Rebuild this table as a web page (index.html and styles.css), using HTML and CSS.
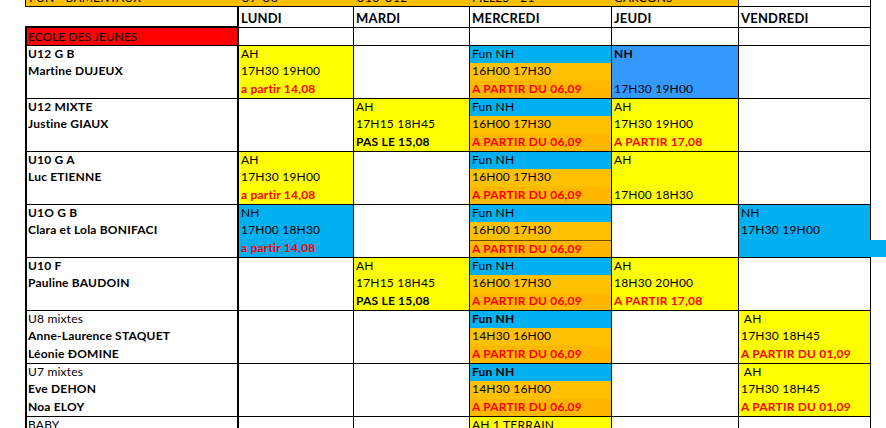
FILE: index.html
```html
<!DOCTYPE html>
<html lang="fr">
<head>
  <meta charset="UTF-8" />
  <meta name="viewport" content="width=device-width, initial-scale=1.0"/>
  <title>Planning Ecole des Jeunes</title>
  <link rel="stylesheet" href="styles.css">
</head>
<body>
  <div class="sheet">
    <!-- bande du haut, presque entièrement coupée -->
    <div class="row strip">
      <div class="cell label gold"><span class="clip">FUN - BAMENTAUX</span></div>
      <div class="cell gold"><span class="clip">U7-U8</span></div>
      <div class="cell gold"><span class="clip">U10-U12</span></div>
      <div class="cell gold"><span class="clip">FILLES - 21</span></div>
      <div class="cell gold edge"><span class="clip">GARCONS</span></div>
      <div class="cell edge"></div>
      <div class="cell spare"></div>
    </div>

    <div class="row head">
      <div class="cell label"></div>
      <div class="cell">LUNDI</div>
      <div class="cell">MARDI</div>
      <div class="cell">MERCREDI</div>
      <div class="cell">JEUDI</div>
      <div class="cell">VENDREDI</div>
      <div class="cell spare"></div>
    </div>

    <div class="row title">
      <div class="cell label red-bg">ECOLE DES JEUNES</div>
      <div class="cell"></div>
      <div class="cell"></div>
      <div class="cell"></div>
      <div class="cell"></div>
      <div class="cell"></div>
      <div class="cell spare"></div>
    </div>

    <!-- U12 G B -->
    <div class="row group">
      <div class="cell label"><div class="ln b">U12 G B</div><div class="ln b">Martine DUJEUX</div><div class="ln"></div></div>
      <div class="cell yellow"><div class="ln">AH</div><div class="ln">17H30 19H00</div><div class="ln warn">a partir 14,08</div></div>
      <div class="cell"></div>
      <div class="cell fun"><div class="ln sky">Fun NH</div><div class="ln gold">16H00 17H30</div><div class="ln amber warn">A PARTIR DU 06,09</div></div>
      <div class="cell azure"><div class="ln b">NH</div><div class="ln"></div><div class="ln">17H30 19H00</div></div>
      <div class="cell"></div>
      <div class="cell spare"></div>
    </div>

    <!-- U12 MIXTE -->
    <div class="row group">
      <div class="cell label"><div class="ln b">U12 MIXTE</div><div class="ln b">Justine GIAUX</div><div class="ln"></div></div>
      <div class="cell"></div>
      <div class="cell yellow"><div class="ln">AH</div><div class="ln">17H15 18H45</div><div class="ln b">PAS LE 15,08</div></div>
      <div class="cell fun"><div class="ln sky">Fun NH</div><div class="ln gold">16H00 17H30</div><div class="ln amber warn">A PARTIR DU 06,09</div></div>
      <div class="cell yellow"><div class="ln">AH</div><div class="ln">17H30 19H00</div><div class="ln warn">A PARTIR 17,08</div></div>
      <div class="cell"></div>
      <div class="cell spare"></div>
    </div>

    <!-- U10 G A -->
    <div class="row group">
      <div class="cell label"><div class="ln b">U10 G A</div><div class="ln b">Luc ETIENNE</div><div class="ln"></div></div>
      <div class="cell yellow"><div class="ln">AH</div><div class="ln">17H30 19H00</div><div class="ln warn">a partir 14,08</div></div>
      <div class="cell"></div>
      <div class="cell fun"><div class="ln sky">Fun NH</div><div class="ln gold">16H00 17H30</div><div class="ln amber warn">A PARTIR DU 06,09</div></div>
      <div class="cell yellow"><div class="ln">AH</div><div class="ln"></div><div class="ln">17H00 18H30</div></div>
      <div class="cell"></div>
      <div class="cell spare"></div>
    </div>

    <!-- U1O G B -->
    <div class="row group">
      <div class="cell label"><div class="ln b">U1O G B</div><div class="ln b">Clara et Lola BONIFACI</div><div class="ln"></div></div>
      <div class="cell sky"><div class="ln">NH</div><div class="ln">17H00 18H30</div><div class="ln warn">a partir 14,08</div></div>
      <div class="cell"></div>
      <div class="cell fun"><div class="ln sky">Fun NH</div><div class="ln gold">16H00 17H30</div><div class="ln amber warn split">A PARTIR DU 06,09</div></div>
      <div class="cell"></div>
      <div class="cell spill"><div class="ln sky">NH</div><div class="ln sky">17H30 19H00</div><div class="ln sky"></div></div>
      <div class="cell spare tail"></div>
    </div>

    <!-- U10 F -->
    <div class="row group">
      <div class="cell label"><div class="ln b">U10 F</div><div class="ln b">Pauline BAUDOIN</div><div class="ln"></div></div>
      <div class="cell"></div>
      <div class="cell yellow"><div class="ln">AH</div><div class="ln">17H15 18H45</div><div class="ln b">PAS LE 15,08</div></div>
      <div class="cell fun"><div class="ln sky">Fun NH</div><div class="ln gold">16H00 17H30</div><div class="ln amber warn">A PARTIR DU 06,09</div></div>
      <div class="cell yellow"><div class="ln">AH</div><div class="ln">18H30 20H00</div><div class="ln warn">A PARTIR 17,08</div></div>
      <div class="cell"></div>
      <div class="cell spare"></div>
    </div>

    <!-- U8 mixtes -->
    <div class="row group">
      <div class="cell label"><div class="ln">U8 mixtes</div><div class="ln b">Anne-Laurence STAQUET</div><div class="ln b">Léonie ĐOMINE</div></div>
      <div class="cell"></div>
      <div class="cell"></div>
      <div class="cell fun"><div class="ln sky b">Fun NH</div><div class="ln gold">14H30 16H00</div><div class="ln amber warn">A PARTIR DU 06,09</div></div>
      <div class="cell"></div>
      <div class="cell yellow"><div class="ln">&nbsp;AH</div><div class="ln">17H30 18H45</div><div class="ln warn">A PARTIR DU 01,09</div></div>
      <div class="cell spare"></div>
    </div>

    <!-- U7 mixtes -->
    <div class="row group">
      <div class="cell label"><div class="ln">U7 mixtes</div><div class="ln b">Eve DEHON</div><div class="ln b">Noa ELOY</div></div>
      <div class="cell"></div>
      <div class="cell"></div>
      <div class="cell fun"><div class="ln sky b">Fun NH</div><div class="ln gold">14H30 16H00</div><div class="ln amber warn">A PARTIR DU 06,09</div></div>
      <div class="cell"></div>
      <div class="cell yellow"><div class="ln">&nbsp;AH</div><div class="ln">17H30 18H45</div><div class="ln warn">A PARTIR DU 01,09</div></div>
      <div class="cell spare"></div>
    </div>

    <!-- BABY -->
    <div class="row group">
      <div class="cell label"><div class="ln">BABY</div><div class="ln"></div><div class="ln"></div></div>
      <div class="cell"></div>
      <div class="cell"></div>
      <div class="cell yellow"><div class="ln">AH 1 TERRAIN</div><div class="ln"></div><div class="ln"></div></div>
      <div class="cell"></div>
      <div class="cell"></div>
      <div class="cell spare"></div>
    </div>
  </div>
</body>
</html>
```

FILE: styles.css
```css
* {
  box-sizing: border-box; margin: 0; padding: 0;
}

html, body {
  overflow: hidden;
}

body {
  background: white;
  font-family: Lato, "Liberation Sans", sans-serif;
  font-size: 12px;
  color: #000;
  letter-spacing: 0.2px;
}

.sheet {
  padding-left: 25px;
  width: 886px;
}

.row {
  display: grid;
  grid-template-columns: 214px 115px 116px 142px 127px 132px 15px;
}

.cell {
  border-right: 1px solid #000;
  border-bottom: 1px solid #000;
  padding-left: 2px;
  white-space: nowrap;
  overflow: hidden;
}

.cell.label {
  border-left: 2px solid #000;
  border-right: 2px solid #000;
  padding-left: 0;
}

.cell.spare {
  border: none;
  padding-left: 0;
}

/* bout de remplissage bleu qui dépasse la dernière colonne */
.cell.tail {
  background: linear-gradient(to bottom, transparent 35px, #00b0f0 35px, #00b0f0 52px, transparent 52px);
}

/* bande du haut */
.strip {
  height: 7px;
}

.strip .cell {
  border-right: none;
}

.strip .cell.label {
  border-left: 1px solid #000;
  padding-left: 3px;
}

.strip .cell.edge {
  border-right: 1px solid #000;
}

.clip {
  display: block;
  line-height: 15px;
  margin-top: -10px;
}

/* en-tête des jours */
.head {
  height: 21px;
}

.head .cell {
  font-weight: bold;
  font-size: 13px;
  line-height: 20px;
  padding-top: 1px;
}

.head .cell.label {
  border-left: none;
  border-bottom: 2px solid #000;
}

.title {
  height: 18px;
}

.title .cell {
  font-size: 12px;
  letter-spacing: 0;
  line-height: 16px;
  padding-top: 1px;
}

.title .cell.label {
  padding-left: 1px;
}

/* lignes de groupe : trois sous-lignes par cellule */
.group {
  height: 53px;
}

.group .cell {
  display: grid;
  grid-template-rows: 17px 18px 17px;
}

.group .cell.label .ln {
  padding-left: 1px;
}

.ln {
  line-height: 15px;
}

.fun {
  padding-left: 0;
}

.fun .ln {
  padding-left: 2px;
}

.spill {
  border-right: none;
  padding-left: 0;
}

.spill .ln {
  padding-left: 2px;
}

.spill .ln:nth-child(-n+2) {
  border-right: 1px solid #000;
}

.split {
  border-top: 1px solid #6b4a00;
}

.b {
  font-weight: bold;
}

.warn {
  color: #ff0000;
  font-weight: bold;
}

/* couleurs de remplissage */
.yellow { background: #ffff00; }
.gold { background: #ffc000; }
.amber { background: #ffb700; }
.sky { background: #00b0f0; }
.azure { background: #3399ff; }
.red-bg { background: #ff0000; }
```
